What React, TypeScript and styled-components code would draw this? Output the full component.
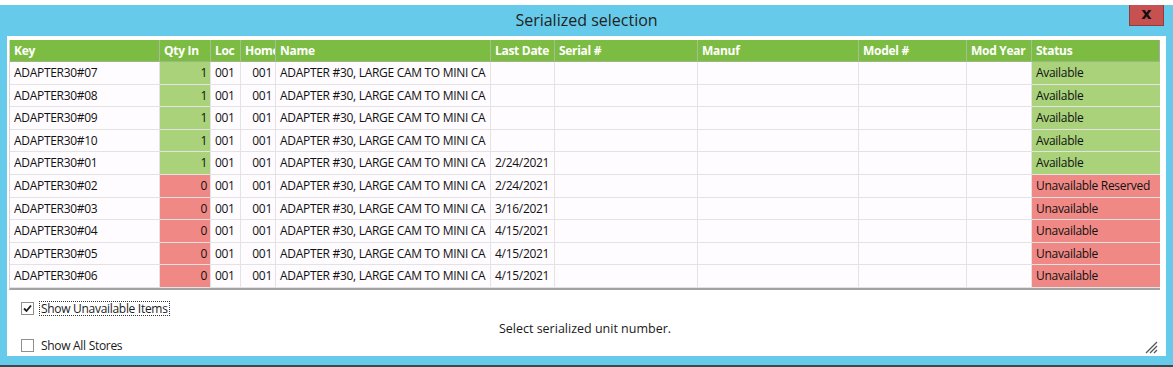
import styled, { createGlobalStyle } from "styled-components";

const GlobalStyle = createGlobalStyle`
  html, body {
    margin: 0;
    padding: 0;
    background: #ffffff;
  }
  body {
    font-family: "Open Sans", "Noto Sans", sans-serif;
    font-size: 12px;
    color: #1a1a1a;
  }
`;

const COLS = "150px 51px 30px 35px 215px 64px 143px 161px 108px 65px 128px";

type Row = {
  key: string;
  qty: number;
  date: string;
  status: string;
};

const rows: Row[] = [
  { key: "ADAPTER30#07", qty: 1, date: "", status: "Available" },
  { key: "ADAPTER30#08", qty: 1, date: "", status: "Available" },
  { key: "ADAPTER30#09", qty: 1, date: "", status: "Available" },
  { key: "ADAPTER30#10", qty: 1, date: "", status: "Available" },
  { key: "ADAPTER30#01", qty: 1, date: "2/24/2021", status: "Available" },
  { key: "ADAPTER30#02", qty: 0, date: "2/24/2021", status: "Unavailable Reserved" },
  { key: "ADAPTER30#03", qty: 0, date: "3/16/2021", status: "Unavailable" },
  { key: "ADAPTER30#04", qty: 0, date: "4/15/2021", status: "Unavailable" },
  { key: "ADAPTER30#05", qty: 0, date: "4/15/2021", status: "Unavailable" },
  { key: "ADAPTER30#06", qty: 0, date: "4/15/2021", status: "Unavailable" },
];

const headers = [
  "Key",
  "Qty In",
  "Loc",
  "Home",
  "Name",
  "Last Date",
  "Serial #",
  "Manuf",
  "Model #",
  "Mod Year",
  "Status",
];

export default function App() {
  return (
    <>
      <GlobalStyle />
      <Window>
        <TitleBar>
          <span />
          <Title>Serialized selection</Title>
          <CloseButton>x</CloseButton>
        </TitleBar>
        <Panel>
          <Grid>
            <HeaderRow>
              {headers.map((h) => (
                <HeaderCell key={h}>{h}</HeaderCell>
              ))}
            </HeaderRow>
            {rows.map((r) => {
              const tone = r.qty > 0 ? "ok" : "bad";
              return (
                <DataRow key={r.key}>
                  <Cell>{r.key}</Cell>
                  <Cell $align="right" $tone={tone}>
                    {r.qty}
                  </Cell>
                  <Cell>001</Cell>
                  <Cell $align="right">001</Cell>
                  <Cell>ADAPTER #30, LARGE CAM TO MINI CA</Cell>
                  <Cell>{r.date}</Cell>
                  <Cell />
                  <Cell />
                  <Cell />
                  <Cell />
                  <Cell $tone={tone}>{r.status}</Cell>
                </DataRow>
              );
            })}
          </Grid>
          <Footer>
            <Options>
              <Option>
                <Box>
                  <svg width="9" height="9" viewBox="0 0 9 9">
                    <path
                      d="M1 4.5 L3.5 7 L8 1.5"
                      fill="none"
                      stroke="#1a1a1a"
                      strokeWidth="1.8"
                    />
                  </svg>
                </Box>
                <OptionLabel $focused>Show Unavailable Items</OptionLabel>
              </Option>
              <Option>
                <Box />
                <OptionLabel>Show All Stores</OptionLabel>
              </Option>
            </Options>
            <Message>Select serialized unit number.</Message>
            <Grip>
              <svg width="14" height="14" viewBox="0 0 14 14">
                <path
                  d="M13 2 L2 13 M13 6 L6 13 M13 10 L10 13"
                  stroke="#555"
                  strokeWidth="1.3"
                />
              </svg>
            </Grip>
          </Footer>
        </Panel>
      </Window>
    </>
  );
}

const Window = styled.div`
  margin-top: 5px;
  height: 360px;
  background: #66cbea;
  border-bottom: 2px solid #3c4a50;
  display: flex;
  flex-direction: column;
`;

const TitleBar = styled.div`
  height: 31px;
  display: grid;
  grid-template-columns: 1fr auto 1fr;
  align-items: start;
`;

const Title = styled.div`
  font-size: 16px;
  color: #222;
  line-height: 30px;
`;

const CloseButton = styled.div`
  justify-self: end;
  margin-right: 9px;
  width: 33px;
  height: 20px;
  background: #c75050;
  border: 1px solid #8e3c3c;
  border-top: none;
  color: #111;
  font-family: "DejaVu Sans", sans-serif;
  font-weight: bold;
  font-size: 16px;
  line-height: 17px;
  text-align: center;
`;

const Panel = styled.div`
  flex: 1;
  margin: 0 7px 9px 7px;
  background: #ffffff;
  padding: 4px 6px 0 3px;
  display: flex;
  flex-direction: column;
`;

const Grid = styled.div`
  border-left: 1px solid #d6d6d6;
  border-right: 1px solid #a8a8a8;
  border-bottom: 2px solid #a3a3a3;
  margin-left: -1px;
`;

const HeaderRow = styled.div`
  display: grid;
  grid-template-columns: ${COLS};
  height: 22px;
  background: #7dbc42;
`;

const HeaderCell = styled.div`
  color: #ffffff;
  font-weight: bold;
  font-size: 12px;
  letter-spacing: -0.3px;
  line-height: 22px;
  padding-left: 4px;
  border-right: 1px solid #a7bd93;
  border-bottom: 1px solid #9ab884;
  white-space: nowrap;
  overflow: hidden;
  &:last-child {
    border-right: none;
  }
`;

const DataRow = styled.div`
  display: grid;
  grid-template-columns: ${COLS};
  height: 22.6px;
  background: #fffcff;
`;

const toneColor = {
  ok: "#a9d27b",
  bad: "#f08985",
};

const Cell = styled.div<{ $align?: "left" | "right"; $tone?: "ok" | "bad" }>`
  background: ${(p) => (p.$tone ? toneColor[p.$tone] : "transparent")};
  text-align: ${(p) => p.$align || "left"};
  padding: 0 3px 0 4px;
  line-height: 22px;
  letter-spacing: -0.3px;
  white-space: nowrap;
  overflow: hidden;
  border-right: 1px solid #e3e3e3;
  border-bottom: 1px solid #e3e3e3;
  color: #111;
  &:last-child {
    border-right: none;
  }
`;

const Footer = styled.div`
  flex: 1;
  display: grid;
  grid-template-columns: 1fr auto 1fr;
`;

const Options = styled.div`
  display: flex;
  flex-direction: column;
  gap: 23px;
  padding: 12px 0 0 11px;
`;

const Option = styled.div`
  display: flex;
  align-items: center;
  gap: 5px;
  height: 14px;
`;

const Box = styled.span`
  width: 11px;
  height: 11px;
  border: 1px solid #8f8f8f;
  background: #fff;
  display: flex;
  align-items: center;
  justify-content: center;
`;

const OptionLabel = styled.span<{ $focused?: boolean }>`
  font-size: 12px;
  letter-spacing: -0.3px;
  color: #1a1a1a;
  padding: 0 1px;
  border: 1px dotted ${(p) => (p.$focused ? "#333" : "transparent")};
  line-height: 13px;
`;

const Message = styled.div`
  align-self: start;
  margin-top: 30px;
  font-size: 12.5px;
  color: #1a1a1a;
`;

const Grip = styled.div`
  justify-self: end;
  align-self: end;
  margin: 0 2px 2px 0;
  height: 14px;
`;
